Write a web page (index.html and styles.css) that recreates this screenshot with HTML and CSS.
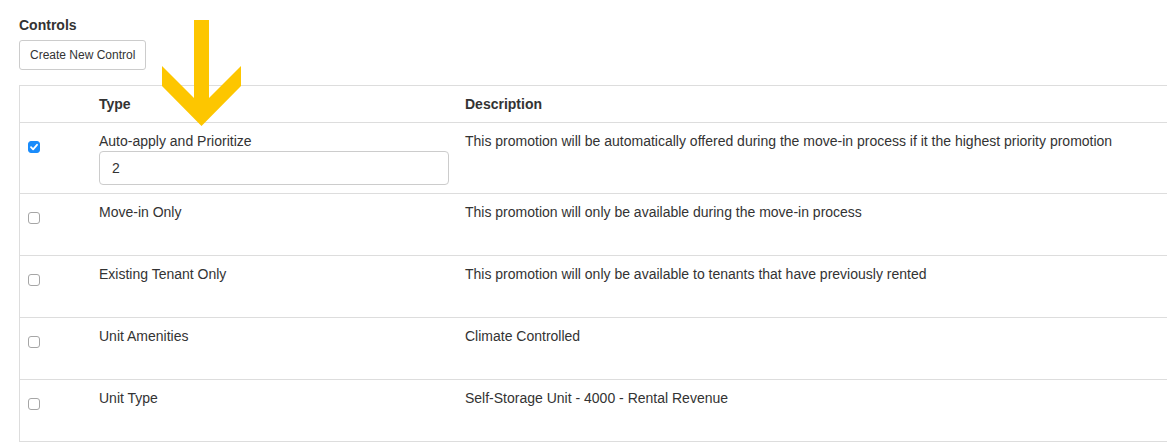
FILE: index.html
```html
<!DOCTYPE html>
<html lang="en">
  <head>
    <meta charset="UTF-8" />
    <meta name="viewport" content="width=device-width,initial-scale=1.0" />
    <title>Controls</title>
    <link rel="stylesheet" href="styles.css">
  </head>
  <body>
    <div class="page">
      <div class="title">Controls</div>
      <button class="btn">Create New Control</button>
      <div class="table-wrap">
        <table class="controls">
          <thead>
            <tr>
              <th class="col-check"></th>
              <th class="col-type">Type</th>
              <th>Description</th>
            </tr>
          </thead>
          <tbody>
            <tr>
              <td class="col-check"><div class="check"><input type="checkbox" checked></div></td>
              <td class="col-type">
                Auto-apply and Prioritize
                <input class="field" type="text" value="2">
              </td>
              <td>This promotion will be automatically offered during the move-in process if it the highest priority promotion</td>
            </tr>
            <tr>
              <td class="col-check"><div class="check"><input type="checkbox"></div></td>
              <td class="col-type">Move-in Only</td>
              <td>This promotion will only be available during the move-in process</td>
            </tr>
            <tr>
              <td class="col-check"><div class="check"><input type="checkbox"></div></td>
              <td class="col-type">Existing Tenant Only</td>
              <td>This promotion will only be available to tenants that have previously rented</td>
            </tr>
            <tr>
              <td class="col-check"><div class="check"><input type="checkbox"></div></td>
              <td class="col-type">Unit Amenities</td>
              <td>Climate Controlled</td>
            </tr>
            <tr>
              <td class="col-check"><div class="check"><input type="checkbox"></div></td>
              <td class="col-type">Unit Type</td>
              <td>Self-Storage Unit - 4000 - Rental Revenue</td>
            </tr>
          </tbody>
        </table>
      </div>
      <svg class="arrow" width="1167" height="448" viewBox="0 0 1167 448">
        <polygon points="194,20 209,20 209,98 241,66 241,86 201.5,126 162,86 162,66 194,98" fill="#fdc600" />
      </svg>
    </div>
  </body>
</html>
```

FILE: styles.css
```css
html,
body {
  margin: 0;
  overflow: hidden;
}
body {
  font-family: "Liberation Sans", Arial, sans-serif;
  font-size: 14px;
  line-height: 20px;
  color: #333;
  background: #fff;
}
.page {
  position: relative;
  padding: 15px 0 0 19px;
  height: 433px;
  overflow: hidden;
}
.title {
  font-weight: bold;
}
.btn {
  display: block;
  margin-top: 5px;
  padding: 5px 10px;
  font-family: inherit;
  font-size: 12px;
  line-height: 18px;
  color: #333;
  background: #fff;
  border: 1px solid #ccc;
  border-radius: 3px;
}
.table-wrap {
  margin-top: 15px;
  width: 1180px;
  border: 1px solid #ddd;
}
.controls {
  width: 100%;
  border-collapse: collapse;
}
.controls th,
.controls td {
  padding: 8px;
  text-align: left;
  vertical-align: top;
  border-top: 1px solid #ddd;
}
.controls thead th {
  border-top: none;
  font-weight: bold;
}
.col-check {
  width: 55px;
}
.col-type {
  width: 350px;
}
.check {
  margin: 10px 0;
  height: 25px;
}
.check input {
  appearance: none;
  -webkit-appearance: none;
  display: block;
  width: 12px;
  height: 12px;
  margin: 7px 0 0;
  border: 1px solid #a6a6a6;
  border-radius: 3px;
  background: #fff;
}
.check input:checked {
  border-color: #1a8cfb;
  background: #1a8cfb url("data:image/svg+xml,%3Csvg xmlns='http://www.w3.org/2000/svg' viewBox='0 0 12 12'%3E%3Cpath d='M3 6.2 5.1 8.3 9 3.8' fill='none' stroke='%23fff' stroke-width='1.8' stroke-linecap='round' stroke-linejoin='round'/%3E%3C/svg%3E") center / 12px 12px no-repeat;
}
.field {
  display: block;
  box-sizing: border-box;
  width: 100%;
  height: 34px;
  padding: 6px 12px;
  font-family: inherit;
  font-size: 14px;
  color: #333;
  border: 1px solid #ccc;
  border-radius: 4px;
}
.arrow {
  position: absolute;
  left: 0;
  top: 0;
  pointer-events: none;
}
```
